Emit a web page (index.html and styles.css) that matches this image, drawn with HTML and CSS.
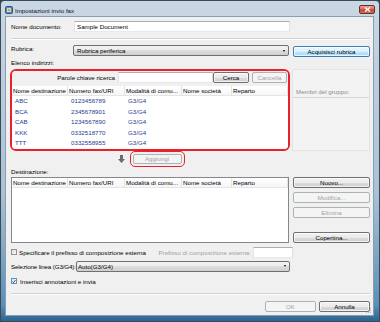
FILE: index.html
```html
<!DOCTYPE html>
<html lang="it">
<head>
<meta charset="utf-8">
<title>Impostazioni invio fax</title>
<link rel="stylesheet" href="styles.css">
</head>
<body>
<div class="window">
  <div class="titlebar">
    <svg class="appicon" width="8" height="8" viewBox="0 0 8 8">
      <rect x="0.5" y="0.5" width="7" height="7" rx="1" fill="#5b86b8" stroke="#2f5582"/>
      <rect x="2" y="2" width="4" height="4" fill="#f3d77a"/>
      <rect x="3" y="3" width="2" height="2" fill="#7fb0dc"/>
    </svg>
    <span class="title">Impostazioni invio fax</span>
    <span class="close"><svg width="7" height="5" viewBox="0 0 7 5"><path d="M1 0.5 L6 4.5 M6 0.5 L1 4.5" stroke="#fff" stroke-width="1.3"/></svg></span>
  </div>

  <div class="client">
    <div class="row r-doc">
      <span class="lbl">Nome documento:</span>
      <span class="edit doc">Sample Document</span>
    </div>
    <div class="sep"></div>
    <div class="row r-rub">
      <span class="lbl">Rubrica:</span>
      <span class="combo rub">Rubrica periferica<i class="drop"></i></span>
      <span class="btn def acq">Acquisisci rubrica</span>
    </div>

    <div class="cap">Elenco indirizzi:</div>
    <div class="abook">
      <div class="mark">
        <div class="search">
          <span class="slbl">Parole chiave ricerca</span>
          <span class="edit kw"></span>
          <span class="btn cerca">Cerca</span>
          <span class="btn off canc">Cancella</span>
        </div>
        <div class="list">
          <div class="lhead">
            <span>Nome destinazione</span><span>Numero fax/URI</span><span>Modalità di comu...</span><span>Nome società</span><span>Reparto</span>
          </div>
          <div class="lrow"><span>ABC</span><span>0123456789</span><span>G3/G4</span><span></span><span></span></div>
          <div class="lrow"><span>BCA</span><span>2345678901</span><span>G3/G4</span><span></span><span></span></div>
          <div class="lrow"><span>CAB</span><span>1234567890</span><span>G3/G4</span><span></span><span></span></div>
          <div class="lrow"><span>KKK</span><span>0332518770</span><span>G3/G4</span><span></span><span></span></div>
          <div class="lrow"><span>TTT</span><span>0332558955</span><span>G3/G4</span><span></span><span></span></div>
        </div>
      </div>
      <div class="members"><div class="mlbl">Membri del gruppo:</div></div>
    </div>

    <div class="addrow">
      <svg class="down" width="7" height="8" viewBox="0 0 7 8"><polygon points="2,0 5,0 5,4 7,4 3.5,8 0,4 2,4" fill="#6a6a6a"/></svg>
      <div class="mark2"><span class="btn off add">Aggiungi</span></div>
    </div>

    <div class="cap2">Destinazione:</div>
    <div class="dest">
      <div class="dlist">
        <div class="lhead">
          <span>Nome destinazione</span><span>Numero fax/URI</span><span>Modalità di comu...</span><span>Nome società</span><span>Reparto</span>
        </div>
      </div>
      <div class="side">
        <span class="btn">Nuovo...</span>
        <span class="btn off gap">Modifica...</span>
        <span class="btn off gap">Elimina</span>
        <span class="btn gap2">Copertina...</span>
      </div>
    </div>

    <div class="row r-pfx">
      <span class="chk"></span>
      <span class="ctext">Specificare il prefisso di composizione esterna</span>
      <span class="pfx-lbl">Prefisso di composizione esterna:</span>
      <span class="edit pfx"></span>
    </div>
    <div class="row r-line">
      <span class="lbl-line">Selezione linea (G3/G4):</span>
      <span class="combo line">Auto(G3/G4)<i class="drop"></i></span>
    </div>
    <div class="row r-ann">
      <span class="chk on"><svg width="5" height="5" viewBox="0 0 5 5"><path d="M0.6 2.6 L1.9 4 L4.4 0.8" fill="none" stroke="#1d3f86" stroke-width="1.1"/></svg></span>
      <span class="ctext">Inserisci annotazioni e invia</span>
    </div>
    <div class="sep sep2"></div>
    <div class="foot">
      <span class="btn off ok">OK</span>
      <span class="btn cancel">Annulla</span>
    </div>
    <svg class="grip" width="6" height="6" viewBox="0 0 6 6" fill="#b8b8b8">
      <rect x="4" y="0" width="1" height="1"/><rect x="2" y="2" width="1" height="1"/><rect x="4" y="2" width="1" height="1"/>
      <rect x="0" y="4" width="1" height="1"/><rect x="2" y="4" width="1" height="1"/><rect x="4" y="4" width="1" height="1"/>
    </svg>
  </div>
</div>
</body>
</html>
```

FILE: styles.css
```css
* { box-sizing: border-box; }
html, body { margin: 0; padding: 0; }
body {
  width: 380px; height: 322px; overflow: hidden;
  background: #34414d;
  font-family: "Liberation Sans", Arial, sans-serif; font-size: 6.2px; color: #000;
}

/* window frame */
.window {
  width: 380px; height: 322px;
  display: flex; flex-direction: column;
  border: 1px solid #3b4856; border-radius: 4px 4px 0 0;
  background: linear-gradient(#cad8e5, #bccddd 25%, #a9c2d7 60%, #5a8fb6 95%, #2c6390);
  padding: 0 5px 5px 4px;
}
.titlebar { height: 15px; flex: none; display: flex; align-items: center; padding-top: 3px; }
.appicon { flex: none; margin-right: 2px; }
.title { color: #111; }
.close {
  margin-left: auto; margin-right: -1px; align-self: flex-start; margin-top: 1px;
  width: 16px; height: 9px;
  border: 1px solid #6b2d2a; border-radius: 2px;
  background: linear-gradient(#e7a493, #d4705e 45%, #c2412e 55%, #d1735f);
  display: flex; align-items: center; justify-content: center;
}

.client {
  flex: 1; position: relative;
  background: #f0f0f0; border: 1px solid #8b9db0;
  padding: 0 3px 0 5px;
  display: flex; flex-direction: column;
}

/* common controls */
.row { display: flex; align-items: center; flex: none; }
.lbl { width: 62px; flex: none; white-space: nowrap; }
.edit {
  height: 11px; flex: none;
  background: #fff; border: 1px solid #abadb3;
  border-color: #abadb3 #dbdfe6 #e3e9ef #e2e3ea;
  display: flex; align-items: center; padding-left: 2px;
}
.combo {
  height: 11px; flex: none;
  border: 1px solid #707070; border-radius: 2px;
  background: linear-gradient(#f2f2f2, #ebebeb 50%, #dddddd 50%, #cfcfcf);
  display: flex; align-items: center; padding-left: 3px;
}
.drop {
  margin-left: auto; margin-right: 3px;
  width: 0; height: 0;
  border-left: 1.5px solid transparent; border-right: 1.5px solid transparent;
  border-top: 2px solid #000;
}
.btn {
  height: 11px; flex: none;
  border: 1px solid #707070; border-radius: 2px;
  background: linear-gradient(#f2f2f2, #ebebeb 50%, #dddddd 50%, #cfcfcf);
  box-shadow: inset 0 0 0 1px rgba(255, 255, 255, 0.7);
  display: flex; align-items: center; justify-content: center;
  white-space: nowrap;
}
.btn.def {
  border-color: #3c7fb1;
  background: linear-gradient(#eaf6fd, #d9f0fc 50%, #bee6fd 50%, #a7d9f5);
}
.btn.off { border-color: #adb2b5; background: #f4f4f4; color: #a3a3a3; box-shadow: none; }
.sep { flex: none; height: 2px; margin-top: 6px; border-top: 1px solid #cfd3d6; border-bottom: 1px solid #fff; }

/* top rows */
.r-doc { margin-top: 4px; height: 11px; }
.doc { width: 216px; margin-left: 1px; }
.r-rub { margin-top: 5px; height: 12px; align-items: flex-start; }
.rub { width: 216px; }
.acq { width: 77px; margin-left: 4px; margin-top: 1px; }

.cap { flex: none; height: 12px; line-height: 12px; }
.cap2 { flex: none; height: 10px; line-height: 10px; }

/* address book */
.abook { flex: none; height: 82px; display: flex; }
.mark {
  width: 280px; margin-left: -1px; flex: none;
  border: 2px solid #e8212b; border-radius: 6px;
  background: #fff; overflow: hidden;
  display: flex; flex-direction: column;
}
.search {
  height: 15px; flex: none;
  display: flex; align-items: flex-start; justify-content: flex-end;
  padding: 1px 1px 0 0; background: #f0f0f0;
}
.slbl { height: 11px; line-height: 11px; white-space: nowrap; }
.kw { width: 95px; margin-left: 3px; }
.cerca { width: 36px; }
.canc { width: 35px; margin-left: 3px; }

.list { flex: 1; background: #fff; overflow: hidden; }
.lhead, .lrow { display: grid; grid-template-columns: 56px 57px 57px 50px 1fr; }
.lhead {
  height: 10px; border-bottom: 1px solid #e5e5e5;
  background: linear-gradient(#fff, #f5f6f7);
}
.lhead span {
  padding-left: 1px; line-height: 9px;
  border-right: 1px solid #e3e3e3;
  white-space: nowrap; overflow: hidden;
}
.lrow { height: 10.6px; line-height: 10.6px; color: #1f3a8f; }
.lrow span { padding-left: 3px; white-space: nowrap; }

.members {
  width: 78px; margin-left: 2px; flex: none;
  background: #f3f3f3; border: 1px solid #e4e4e4;
  padding-top: 17px;
}
.mlbl { height: 11px; line-height: 10px; padding-left: 3px; color: #8c8c8c; border-bottom: 1px solid #d6d6d6; }

.addrow { flex: none; height: 16px; display: flex; align-items: center; }
.down { margin-left: 107px; flex: none; }
.mark2 {
  margin-left: 5px; width: 55px; height: 16px;
  border: 1.5px solid #e8212b; border-radius: 5px;
  padding: 1.5px;
}
.add { width: 49px; height: 10px; }

/* destination */
.dest { flex: none; height: 66px; display: flex; }
.dlist { width: 278px; flex: none; border: 1px solid #828790; background: #fff; }
.side { width: 77px; margin-left: 4px; display: flex; flex-direction: column; }
.side .gap { margin-top: 4px; }
.side .gap2 { margin-top: 14px; }

/* options */
.r-pfx { margin-top: 3px; height: 12px; }
.chk {
  width: 6px; height: 6px; flex: none;
  border: 1px solid #8f8f8f;
  background: linear-gradient(135deg, #dcdcdc, #fafafa);
  display: flex; align-items: center; justify-content: center;
}
.chk.on { background: linear-gradient(135deg, #cfe3f5, #f6fbff); border-color: #6f8fb0; }
.ctext { margin-left: 2px; white-space: nowrap; }
.pfx-lbl { margin-left: auto; color: #a0a0a0; white-space: nowrap; }
.pfx { width: 40px; margin-left: 2px; margin-right: 77px; }
.r-line { margin-top: 2px; height: 12px; padding-right: 80px; }
.lbl-line { flex: none; white-space: nowrap; letter-spacing: -0.12px; }
.line { flex: 1; padding-left: 1px; }
.r-ann { margin-top: 3px; height: 12px; }
.r-ann .ctext { margin-left: 3px; }
.sep2 { margin-top: 6px; }

.foot { flex: none; margin-top: 6px; display: flex; justify-content: flex-end; }
.ok { width: 51px; }
.cancel { width: 51px; margin-left: 3px; }

.grip { position: absolute; right: 1px; bottom: 1px; }
```
